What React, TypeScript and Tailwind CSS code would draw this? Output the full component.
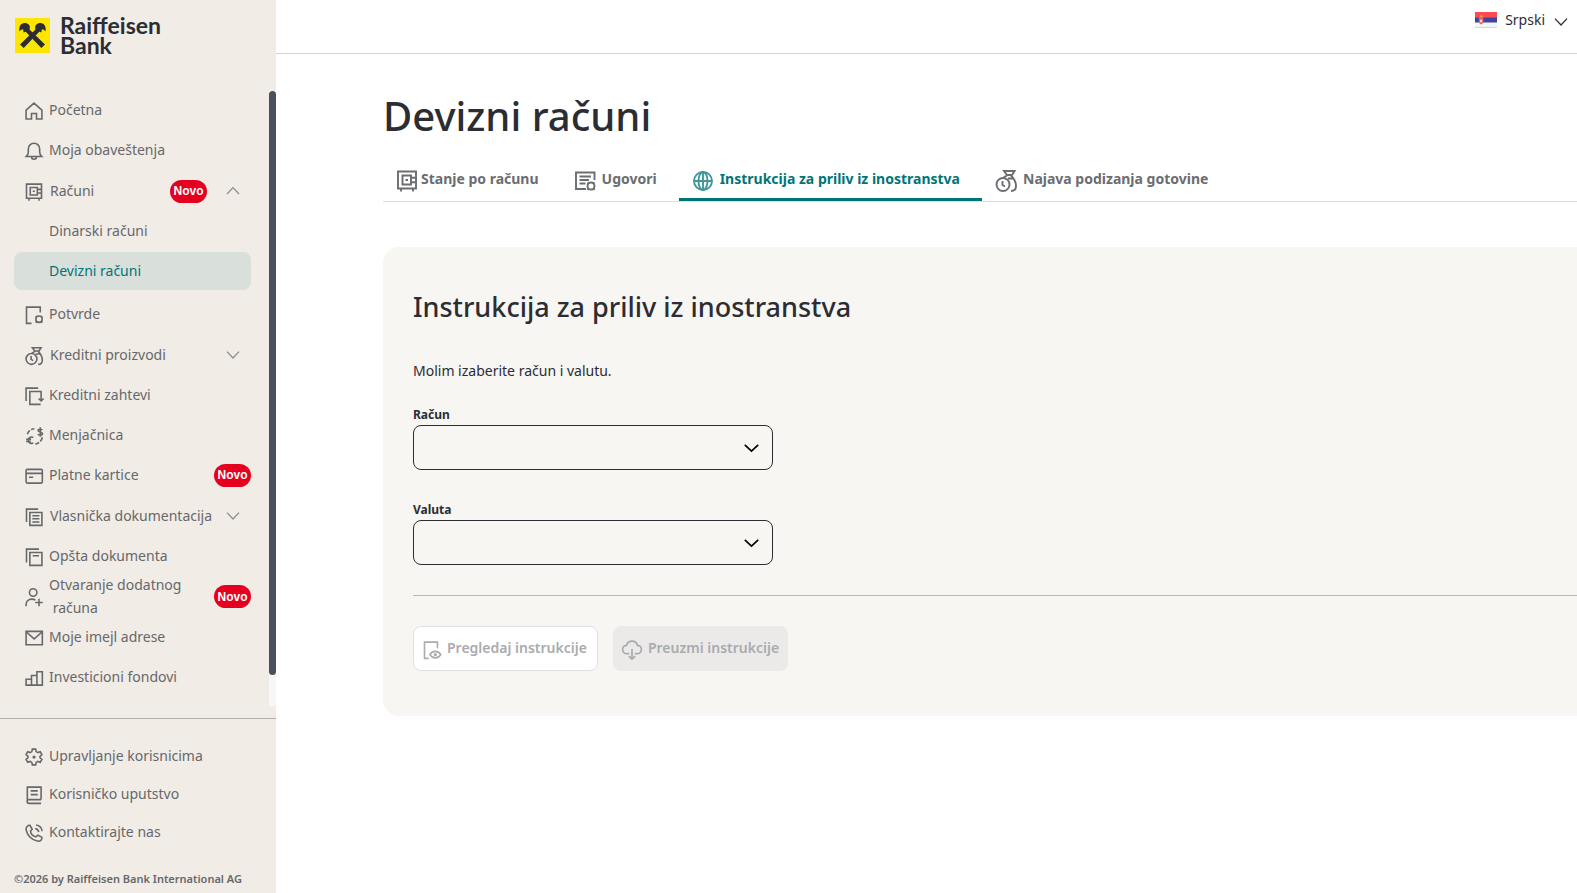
import { useState } from 'react';
import type { ReactNode } from 'react';
import clsx from 'clsx';

type IconProps = { name: string; className?: string };

// all icons are drawn on a 24x24 grid
const icons: Record<string, ReactNode> = {
  home: <path d="M2.500 21.500V11L12 2.500 21.500 11v10.500h-6.500v-6.500H9v6.500z" />,
  bell: <path d="M2.800 18.500c1.700-1.500 2.400-3 2.400-5.200V9.500a6.800 6.800 0 0 1 13.600 0v3.800c0 2.200.7 3.700 2.400 5.200zM9 18.800a3 3 0 0 0 6 0" />,
  safe: (
    <>
      <path d="M3 2.500h18v17H3zM6 20v2.500M18 20v2.500" />
      <path d="M7.500 6.500h8.500v9H7.500zM10.500 11h2.500M16 8.800h4.500M16 13.200h4.500" />
    </>
  ),
  certificate: (
    <>
      <path d="M9 22H3V2.500h16.500V9" />
      <circle cx="18" cy="17" r="3.800" />
      <path d="M15.200 14.200l-1-1M20.800 14.200l1-1M15.200 19.800l-1 1.500M20.800 19.800l1 1.500" />
    </>
  ),
  moneyBag: (
    <>
      <path d="M10 2h10.500l-2.500 4h-5zM13 6.500L9.500 8.500M17 6.500c3.500 3.500 5 7 5 10.500 0 3.300-1.800 5-5 5M14 9.500h5.500" />
      <circle cx="9" cy="15.500" r="6.500" />
      <path d="M8.500 12v4l2.500 1.500" />
    </>
  ),
  request: (
    <>
      <path d="M17 2.500H2.500V18" />
      <path d="M20.500 17.500v-11H7V22h13M17.500 15l3 3 3-3" />
    </>
  ),
  exchange: (
    <>
      <path d="M4 10C5 6.500 8 3.500 12.500 3.200M22 13.500c-.8 4.500-4.200 7.500-8.500 8.200" strokeDasharray="5.500 2" />
      <path d="M22 4.800c-.8-1-5.200-1.500-5.200.7 0 2.300 5.400 1.300 5.400 3.700 0 2.300-4.400 2-5.700.6M19.500 1.500v11.500" />
      <path d="M11 14c-1-1-5.700-1.500-5.700 3s4.700 4.200 5.700 3M2.500 16h6M2.500 18.500h5.500" />
    </>
  ),
  card: (
    <>
      <rect x="2.500" y="4" width="19.500" height="16.500" rx="1.500" />
      <path d="M2.500 8.800H22M6 13.500h5" />
    </>
  ),
  documents: (
    <>
      <path d="M17 2.500H3V18" />
      <path d="M7 6.500h14.500V22H7zM10 10.500h8.500M10 14.200h8.500M10 18h8.500" />
    </>
  ),
  copy: (
    <>
      <path d="M18 2.500H3V18.500" />
      <path d="M7 6.500h14.500V22H7zM10.500 10.500h7.500" />
    </>
  ),
  userAdd: (
    <>
      <circle cx="11" cy="6.500" r="4.500" />
      <path d="M2.500 23v-2c0-4 3-6.500 7-6.500 1.800 0 3.200.5 4.200 1.200M18 14v9M13.500 18.500h9" />
    </>
  ),
  mail: <path d="M2.500 4H22v16H2.500zM2.500 4.500L12.200 13 22 4.500" />,
  chart: <path d="M2.500 13.500h6.500v7H2.500zM9 9h6.500v11.500H9zM15.500 4.500H22v16h-6.500z" />,
  gear: (
    <>
      <path d="M10 2.500h4l.6 3 2 1.200 2.900-1 2 3.500-2.300 2v1.600l2.300 2-2 3.500-2.900-1-2 1.200-.6 3h-4l-.6-3-2-1.200-2.900 1-2-3.500 2.300-2v-1.600l-2.300-2 2-3.500 2.900 1 2-1.200z" />
      <circle cx="12" cy="12" r="1" />
    </>
  ),
  book: <path d="M20.500 17.500V2.500H4v17M20.500 17.500H6a2 2 0 0 0 0 4.500h14.500M8 7h8.500M8 11.500h8.500" />,
  phone: (
    <>
      <path d="M7.200 2.800L9.800 7.500 7.800 10c.5 2.800 3.500 5.800 6.500 6.600l2.300-2 4.800 2.600c.8 3-2 5.200-5.400 4.500C9 20.500 3.500 14.500 2.500 8c-.4-2.800 2-5.500 4.700-5.200z" />
      <path d="M13.500 6.500c2.300.4 3.800 2 4.200 4.300M14.500 2.300c3.900.4 6.700 3.400 7.300 7.500" />
    </>
  ),
  contract: (
    <>
      <path d="M13 20H3V3.500h18.500v7.500" />
      <path d="M6.500 7.500H18M6.500 11H16M6.500 14.500h6" />
      <circle cx="18" cy="17" r="3.500" />
      <path d="M15.500 14.500l-1-1M20.500 14.500l1-1M15.500 19.500l-1 1.500M20.500 19.500l1 1.500" />
    </>
  ),
  globe: (
    <>
      <circle cx="12" cy="12" r="9" />
      <ellipse cx="12" cy="12" rx="4.500" ry="9" />
      <path d="M12 3v18M3 12h18" />
    </>
  ),
  preview: (
    <>
      <path d="M8 22H3V2.500h15.500V10" />
      <path d="M9.500 17.500c3-5.200 10-5.200 13 0-3 5.200-10 5.200-13 0z" />
      <circle cx="16" cy="17.500" r="1" />
    </>
  ),
  download: <path d="M9 17H6.500A4.500 4.500 0 0 1 6 8a6.200 6.200 0 0 1 12 0 4.500 4.500 0 0 1-.5 9H15M12 12v11M8.500 19.800L12 23l3.500-3.200" />,
  down: <path d="M3 7l9 9.500L21 7" />,
  up: <path d="M3 16.500L12 7l9 9.500" />,
};

function Icon({ name, className }: IconProps) {
  return (
    <svg viewBox="0 0 24 24" fill="none" stroke="currentColor" strokeWidth={1.900} className={clsx('shrink-0', className)} aria-hidden="true">
      {icons[name]}
    </svg>
  );
}

type NavItem = {
  id: string;
  label: ReactNode;
  icon: string;
  isNew?: boolean;
  children?: { id: string; label: string }[];
};

const navItems: NavItem[] = [
  { id: 'home', label: 'Početna', icon: 'home' },
  { id: 'notifications', label: 'Moja obaveštenja', icon: 'bell' },
  {
    id: 'accounts',
    label: 'Računi',
    icon: 'safe',
    isNew: true,
    children: [
      { id: 'rsd', label: 'Dinarski računi' },
      { id: 'fx', label: 'Devizni računi' },
    ],
  },
  { id: 'certificates', label: 'Potvrde', icon: 'certificate' },
  { id: 'loans', label: 'Kreditni proizvodi', icon: 'moneyBag', children: [] },
  { id: 'requests', label: 'Kreditni zahtevi', icon: 'request' },
  { id: 'exchange', label: 'Menjačnica', icon: 'exchange' },
  { id: 'cards', label: 'Platne kartice', icon: 'card', isNew: true },
  { id: 'ownership', label: 'Vlasnička dokumentacija', icon: 'documents', children: [] },
  { id: 'general', label: 'Opšta dokumenta', icon: 'copy' },
  { id: 'newAccount', label: <>Otvaranje dodatnog<br />&nbsp;računa</>, icon: 'userAdd', isNew: true },
  { id: 'emails', label: 'Moje imejl adrese', icon: 'mail' },
  { id: 'funds', label: 'Investicioni fondovi', icon: 'chart' },
];

const footerItems = [
  { id: 'users', label: 'Upravljanje korisnicima', icon: 'gear' },
  { id: 'manual', label: 'Korisničko uputstvo', icon: 'book' },
  { id: 'contact', label: 'Kontaktirajte nas', icon: 'phone' },
];

const tabs = [
  { id: 'balance', label: 'Stanje po računu', icon: 'safe' },
  { id: 'contracts', label: 'Ugovori', icon: 'contract' },
  { id: 'instruction', label: 'Instrukcija za priliv iz inostranstva', icon: 'globe' },
  { id: 'cash', label: 'Najava podizanja gotovine', icon: 'moneyBag' },
];

function NewBadge() {
  return (
    <span className="flex h-[23px] w-[37px] shrink-0 items-center justify-center rounded-full bg-[#e60020] font-['Liberation_Sans',sans-serif] text-xs font-bold text-white">
      Novo
    </span>
  );
}

function Logo() {
  return (
    <a href="#" className="flex items-start gap-[10px] pl-[15px] pt-[15px] text-[#2b2d33]">
      <svg viewBox="0 0 35 35" className="mt-[3px] h-[35px] w-[35px] shrink-0" aria-hidden="true">
        <path d="M0 0h35v35H0z" fill="#fee600" />
        <g fill="#2b2d33">
          <path d="M5 26.500L20.500 11.500C19 7.500 22 5 25.500 5c3.500 0 6 3.500 5 8.500-1.500-2-2.500-2.300-4-1.800.5 1 .2 2-.5 3-.5-1-1.300-1.200-2.200-.5L8.700 30z" />
          <path d="M30 26.500L14.500 11.500C16 7.500 13 5 9.500 5 6 5 3.500 8.500 4.500 13.500c1.500-2 2.500-2.300 4-1.800-.5 1-.2 2 .5 3 .5-1 1.300-1.200 2.200-.5L26.300 30z" />
        </g>
      </svg>
      <span className="font-['Lato',sans-serif] text-[23px] font-bold leading-5">
        Raiffeisen
        <br />
        Bank
      </span>
    </a>
  );
}

function Sidebar() {
  const [openId, setOpenId] = useState('accounts');
  const [activeId, setActiveId] = useState('fx');

  return (
    <aside className="flex w-[276px] shrink-0 flex-col bg-[#f1ece6] text-sm text-[#66686b]">
      <div className="h-[90px]">
        <Logo />
      </div>

      <div className="flex h-[616px]">
        <nav className="flex-1">
          <ul>
            {navItems.map((item) => (
              <li key={item.id}>
                {item.children ? (
                  <button
                    onClick={() => setOpenId(openId === item.id ? '' : item.id)}
                    className="flex h-[41px] w-full items-center pl-6 pr-6 pt-px text-left"
                  >
                    <Icon name={item.icon} className="mr-1.5 mt-px h-5 w-5" />
                    <span className="flex-1 whitespace-nowrap">{item.label}</span>
                    {item.isNew && <NewBadge />}
                    <Icon
                      name={openId === item.id ? 'up' : 'down'}
                      className={clsx('mr-1 h-4 w-4 text-[#8b8d8f]', item.isNew && 'ml-[18px]')}
                    />
                  </button>
                ) : (
                  <a
                    href="#"
                    className={clsx(
                      'flex items-center pl-6 pr-[18px]',
                      item.id === 'newAccount' ? 'h-[41px] leading-[23px]' : 'h-10'
                    )}
                  >
                    <Icon name={item.icon} className="mr-[5px] mt-px h-5 w-5" />
                    <span className={clsx('flex-1', item.id === 'newAccount' && 'pb-0.5')}>{item.label}</span>
                    {item.isNew && <NewBadge />}
                  </a>
                )}

                {item.children && openId === item.id && item.children.length > 0 && (
                  <ul className="mb-[3px]">
                    {item.children.map((c) => (
                      <li key={c.id} className="py-px pl-[14px] pr-[18px]">
                        <a
                          href="#"
                          onClick={() => setActiveId(c.id)}
                          className={clsx(
                            'flex h-[38px] items-center rounded-lg pl-[35px]',
                            activeId === c.id && 'bg-[#d9dfda] text-[#007578]'
                          )}
                        >
                          {c.label}
                        </a>
                      </li>
                    ))}
                  </ul>
                )}
              </li>
            ))}
          </ul>
        </nav>
        <div className="mt-px w-[7px] bg-[#f7f7f7]">
          <div className="h-[584px] rounded-full bg-[#4a4f5c]" />
        </div>
      </div>

      <ul className="mt-3 border-t border-[#aeaeac] pt-[18px]">
        {footerItems.map((item) => (
          <li key={item.id}>
            <a href="#" className="flex h-[38px] items-center pl-6">
              <Icon name={item.icon} className="mr-[5px] mt-0.5 h-5 w-5" />
              {item.label}
            </a>
          </li>
        ))}
      </ul>
      <p className="mt-auto pb-1.5 pl-[14px] text-[11px] font-semibold leading-4">©2026 by Raiffeisen Bank International AG</p>
    </aside>
  );
}

function SerbianFlag() {
  return (
    <svg viewBox="0 0 22 16" className="h-4 w-[22px]" aria-hidden="true">
      <path d="M0 0h22v16H0z" fill="#f4f4f4" />
      <path d="M0 0h22v6H0z" fill="#fb4a50" />
      <path d="M0 5.500h22v5H0z" fill="#3f459c" />
      <path d="M0 15.500h22" stroke="#f9c9ca" />
      <path d="M3.800 5h4.600v4.500c0 1.500-1.300 2.300-2.300 3-1-.7-2.300-1.500-2.300-3z" fill="#e9605f" />
      <path d="M6.100 7.500v3M5 9h2.200" stroke="#fff" />
      <path d="M4.600 5c0-2.200 3-2.200 3 0z" fill="#e8a33d" />
    </svg>
  );
}

function SelectField({ id, label }: { id: string; label: string }) {
  return (
    <div className="w-[360px] max-w-full">
      <label htmlFor={id} className="block pt-px text-xs font-bold leading-5">
        {label}
      </label>
      <div className="relative">
        <select id={id} className="h-[45px] w-full appearance-none rounded-lg border border-[#2b2d33] bg-transparent px-3 text-sm">
          <option value=""></option>
        </select>
        <svg viewBox="0 0 16 16" className="pointer-events-none absolute right-[14px] top-[15px] h-4 w-4" fill="none" stroke="#000" strokeWidth={1.700} aria-hidden="true">
          <path d="M1.800 4.800L8.500 11l6.700-6.200" />
        </svg>
      </div>
    </div>
  );
}

export default function App() {
  const [activeTab, setActiveTab] = useState('instruction');

  return (
    <div className="flex min-h-screen overflow-hidden bg-white font-['Noto_Sans',sans-serif] text-[#2b2d33]">
      <Sidebar />

      <div className="min-w-0 flex-1">
        <header className="flex h-[54px] justify-end border-b border-[#d3d4d5] pr-2">
          <button className="flex h-10 items-center text-sm">
            <SerbianFlag />
            <span className="mx-2">Srpski</span>
            <Icon name="down" className="mt-1 h-4 w-4" />
          </button>
        </header>

        <main className="pl-[107px]">
          <h1 className="pt-[37px] text-[40px] font-medium leading-[50px]">Devizni računi</h1>

          <div role="tablist" className="mt-[17px] flex h-[44px] border-b border-[#dcdddd]">
            {tabs.map((t) => (
              <button
                key={t.id}
                role="tab"
                aria-selected={activeTab === t.id}
                onClick={() => setActiveTab(t.id)}
                className={clsx(
                  'flex h-[43px] items-center whitespace-nowrap border-b-[3px] pl-3 pr-[22px] pt-0.5 text-sm font-bold',
                  activeTab === t.id ? 'border-[#007578] text-[#007578]' : 'border-transparent text-[#6b6d70]'
                )}
              >
                <Icon
                  name={t.icon}
                  className={clsx('mt-[3px] h-6 w-6', t.icon === 'safe' ? 'mr-0.5' : 'mr-[5px]', t.icon === 'globe' && 'opacity-75')}
                />
                {t.label}
              </button>
            ))}
          </div>

          <section className="mt-[45px] rounded-l-2xl bg-[#f7f6f2] pb-[45px] pl-[30px] pt-10">
            <h2 className="text-[27px] font-medium leading-10">Instrukcija za priliv iz inostranstva</h2>
            <p className="mt-[34px] text-sm leading-5">Molim izaberite račun i valutu.</p>

            <form onSubmit={(e) => e.preventDefault()}>
              <div className="mt-[23px] flex flex-col gap-[29px]">
                <SelectField id="racun" label="Račun" />
                <SelectField id="valuta" label="Valuta" />
              </div>

              <hr className="mt-[30px] border-[#b5b8b1]" />

              <div className="mt-[30px] flex gap-[15px]">
                <button disabled className="flex h-[45px] items-center rounded-lg border border-[#dfe0e1] bg-white pb-0.5 pl-2 pr-[10px] text-sm font-semibold text-[#a9abae]">
                  <Icon name="preview" className="mr-[5px] mt-1 h-5 w-5" />
                  Pregledaj instrukcije
                </button>
                <button disabled className="flex h-[45px] items-center rounded-lg bg-[#ebeae8] pb-0.5 pl-2 pr-[9px] text-sm font-semibold text-[#a9abae]">
                  <Icon name="download" className="mr-[5px] mt-0.5 h-[22px] w-[22px]" />
                  Preuzmi instrukcije
                </button>
              </div>
            </form>
          </section>
        </main>
      </div>
    </div>
  );
}
